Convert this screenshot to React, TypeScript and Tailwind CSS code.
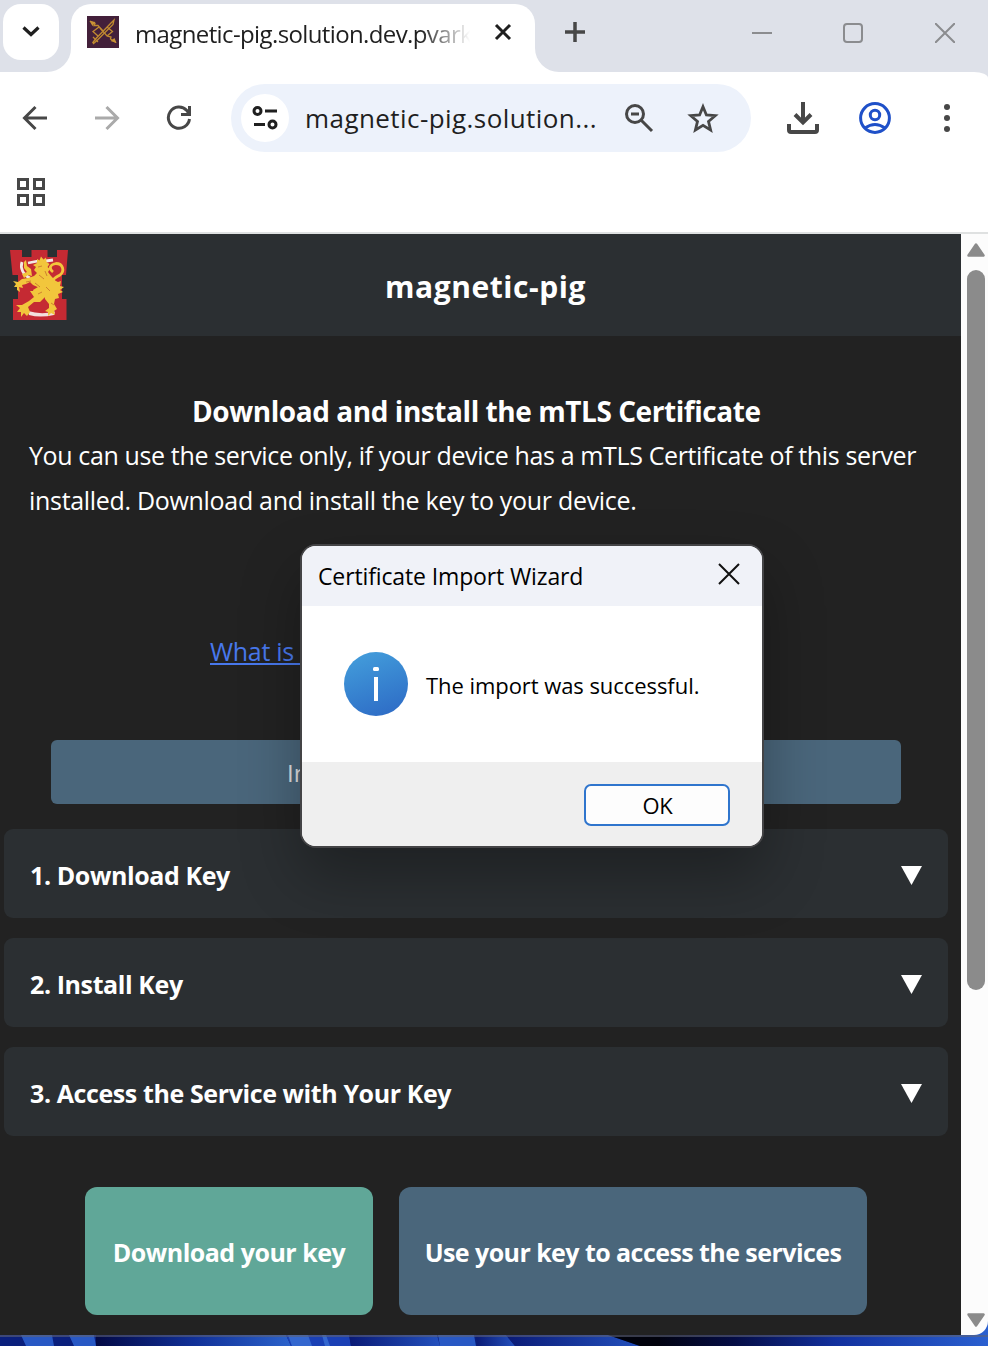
import type { ReactNode } from 'react';

const navButton = 'flex h-[40px] w-[40px] items-center justify-center';

function Favicon() {
  return (
    <svg width="32" height="32" viewBox="0 0 32 32" className="shrink-0">
      <rect width="32" height="32" fill="#43203a" />
      <g fill="none" stroke="#c08a30" strokeWidth="1.3">
        <path d="M5.500 27 L8.500 23 L24 7 L27 4 L26 8.500 L10 24.500 L6 28" />
        <path d="M3 5 L8 7.500 L7 9.500 L11 9.500 L20 20 L24 21 L23.500 23 L29 26.500" />
        <path d="M12 11 L6 15.500 L11 20 M20 11 L25.500 15.500 L20 20 M6 21 L11 26 M13 12 L16 15" />
      </g>
      <path d="M2.500 5 l6 1 -3 4z M29.500 27 l-6 -2 4 -3z" fill="#c99336" />
    </svg>
  );
}

function Crest() {
  return (
    <svg width="60" height="72" viewBox="0 0 60 72">
      <path d="M1 1 H13 V8 H22.500 V1 H38.500 V8 H48 V1 H59 L57 26 H53 V50 H57.500 V71 H4 V50 H9 V26 H3.500Z" fill="#c52a33" />
      <path d="M13 13 C11 19 14 26 21 29 M19 14 L29 12 M37 12 L44 11" fill="none" stroke="#f3e9e5" strokeWidth="2.800" />
      <path d="M19 62 Q32 66 46 62.500 L45 66 Q31 69 20 66Z" fill="#f2dfdd" />
      <g fill="#f2c63c">
        <path d="M28 14 L28 10 L30.500 11.500 L32 7.500 L34.500 10.500 L37 8.500 L37.500 13 L40.500 15 L38.500 18 L41 20 L39 23 L42 27 L45 30 L44 35 L33 40 L24 36 L21 33 L17 35 L13 36 L14 39 L10 38 L11 43 L8 41 L8 38 L5 38 L7 35 L4 32 L9 33 L13 30 L19 29 L25 27 L28 24 L25 21 L27 18 L24 16Z" />
        <path d="M30 30 L43 29 L46 34 L52 32 L51 37 L55 38 L51 41 L54 43 L49 45 L50 49 L46 50 L45 55 L48 60 L45 62 L46 66 L42 64 L39 67 L39 63 L36 62 L40 59 L40 55 L36 50 L35 44 L29 45 L25 44 L24 41 L29 38Z" />
        <path d="M21 42 L36 42 L36 48 L31 53 L25 53 L19 58 L21 63 L18 67 L15 64 L12 68 L12 63 L8 63 L11 59 L7 56 L13 56 L20 52 L25 48Z" />
        <path d="M15 13 L17 11 L18 17 L22 20 L23 27 L19 26 L15 29 L13 25 L18 23 L15 19Z" />
      </g>
      <path d="M50 35 C40 31 46 29 51 26 C56 22 54 14.500 47 14.500 C40 16 40 20 44 23" fill="none" stroke="#f2c63c" strokeWidth="2.800" />
      <path d="M29 18 L33 17 M30 26 L35 30 M26 34 L31 38 M37 38 L41 42 M29 45 L33 43 M42 54 L45 56 M17 33 L22 32 M36 22 L38 27" stroke="#cf8230" strokeWidth="1" />
    </svg>
  );
}

function TabStrip() {
  return (
    <div className="flex h-[72px] shrink-0 bg-white text-[#1f1f1f]">
      <div className="w-[71px] rounded-br-[24px] bg-[#dee1e9] pl-[3px] pt-[4px]">
        <div className="flex h-[56px] w-[56px] items-center justify-center rounded-[18px] bg-white">
          <svg width="20" height="14" viewBox="0 0 20 14"><path d="M2.500 2.500 L10 9.500 L17.500 2.500" fill="none" stroke="#1f1f1f" strokeWidth="3.200" /></svg>
        </div>
      </div>
      <div className="w-[464px] bg-[#dee1e9] pt-[4px]">
        <div className="flex h-[68px] rounded-t-[20px] bg-white pl-[16px] pt-[12px]">
          <Favicon />
          <div className="ml-[16px] mt-[1px] h-[34px] w-[335px] whitespace-nowrap text-[24px] leading-[34px] tracking-[-0.62px] [mask-image:linear-gradient(to_right,black_285px,transparent_335px)]">
            magnetic-pig.solution.dev.pvark
          </div>
          <svg className="ml-[24px] mt-[7px]" width="18" height="18" viewBox="0 0 18 18"><path d="M2 2 L16 16 M16 2 L2 16" stroke="#1f1f1f" strokeWidth="3" /></svg>
        </div>
      </div>
      <div className="flex flex-1 rounded-bl-[24px] bg-[#dee1e9] pl-[30px] pt-[22px]">
        <svg width="20" height="20" viewBox="0 0 20 20"><path d="M10 0 V20 M0 10 H20" stroke="#474747" strokeWidth="3.500" /></svg>
        <svg className="ml-[167px] mt-px" width="20" height="20" viewBox="0 0 20 20"><path d="M0 10 H20" stroke="#8b8c8f" strokeWidth="2" /></svg>
        <svg className="ml-[71px] mt-px" width="20" height="20" viewBox="0 0 20 20"><rect x="1" y="1" width="18" height="18" rx="3" fill="none" stroke="#8b8c8f" strokeWidth="2" /></svg>
        <svg className="ml-[72px] mt-px" width="20" height="20" viewBox="0 0 20 20"><path d="M0 0 L20 20 M20 0 L0 20" stroke="#8b8c8f" strokeWidth="2" /></svg>
      </div>
    </div>
  );
}

function Toolbar() {
  return (
    <div className="h-[162px] shrink-0 bg-[#dee1e9]">
      <div className="h-full border-b-2 border-[#dfe1e1] bg-white pt-[12px] [border-top-right-radius:14px_6px]">
        <div className="flex h-[68px] items-center pl-[15px]">
          <div className={navButton}>
            <svg width="26" height="26" viewBox="0 0 26 26"><path d="M25 13 H2.500 M13.500 2 L2.500 13 L13.500 24" fill="none" stroke="#474747" strokeWidth="3" /></svg>
          </div>
          <div className={`${navButton} ml-[32px]`}>
            <svg width="26" height="26" viewBox="0 0 26 26"><path d="M1 13 H23.500 M12.500 2 L23.500 13 L12.500 24" fill="none" stroke="#aaa" strokeWidth="3" /></svg>
          </div>
          <div className={`${navButton} ml-[32px]`}>
            <svg width="26" height="26" viewBox="0 0 26 26" fill="none" stroke="#474747" strokeWidth="3"><path d="M23.500 14 A10.600 10.600 0 1 1 20.800 5.500 L22.500 8" /><path d="M23.500 1 V9.500 H15" /></svg>
          </div>
          <div className="ml-[32px] flex h-[68px] w-[520px] items-center rounded-full bg-[#edf2fb] pl-[10px]">
            <div className="flex h-[48px] w-[48px] shrink-0 items-center justify-center rounded-full bg-white">
              <svg width="26" height="24" viewBox="0 0 26 24" fill="none" stroke="#1f1f1f" strokeWidth="3"><circle cx="5.500" cy="5" r="3.500" /><path d="M13 5 H25 M2 18.500 H13" /><circle cx="20.500" cy="18.500" r="3.500" /></svg>
            </div>
            <span className="ml-[16px] w-[302px] whitespace-nowrap text-[26px] leading-[36px] tracking-[0.43px] text-[#1f1f1f]">magnetic-pig.solution...</span>
            <svg className="ml-[17px]" width="30" height="30" viewBox="0 0 30 30" fill="none" stroke="#474747" strokeWidth="3"><circle cx="11" cy="11" r="8.500" /><path d="M7 11 H15 M17 17 L28 28" /></svg>
            <svg className="ml-[33px]" width="32" height="30" viewBox="0 0 32 30"><path d="M16 3.700 L19.400 12 L28.200 12.700 L21.500 18.400 L23.600 27 L16 22.400 L8.400 27 L10.500 18.400 L3.800 12.700 L12.600 12Z" fill="none" stroke="#474747" strokeWidth="2.800" /></svg>
          </div>
          <svg className="ml-[36px]" width="32" height="32" viewBox="0 0 32 32" fill="none" stroke="#474747" strokeWidth="4"><path d="M16 0 V20 M8 12.500 L16 20.500 L24 12.500 M2 22 V28 Q2 30 4 30 H28 Q30 30 30 28 V22" /></svg>
          <svg className="ml-[40px]" width="32" height="32" viewBox="0 0 32 32" fill="none" stroke="#1f50c8" strokeWidth="3"><circle cx="16" cy="16" r="14.400" /><circle cx="16" cy="13" r="4.700" /><path d="M6 26 Q16 19 26 26" /></svg>
          <svg className="ml-[53px]" width="6" height="30" viewBox="0 0 6 30" fill="#474747"><circle cx="3" cy="4" r="3" /><circle cx="3" cy="15" r="3" /><circle cx="3" cy="26" r="3" /></svg>
        </div>
        <svg className="ml-[17px] mt-[26px]" width="28" height="28" viewBox="0 0 28 28" fill="none" stroke="#474747" strokeWidth="3"><path d="M1.500 1.500 H10.500 V10.500 H1.500Z M17.500 1.500 H26.500 V10.500 H17.500Z M1.500 17.500 H10.500 V26.500 H1.500Z M17.500 17.500 H26.500 V26.500 H17.500Z" /></svg>
      </div>
    </div>
  );
}

function Step({ children }: { children: ReactNode }) {
  return (
    <div className="flex h-[89px] items-center justify-between rounded-[9px] bg-[#2b2f32] pl-[26px] pr-[26px] pt-[4px] text-[25px] font-bold tracking-[-0.4px]">
      {children}
      <svg width="21" height="19" viewBox="0 0 21 19"><path d="M0 0 H21 L10.500 19Z" fill="#fff" /></svg>
    </div>
  );
}

function ScrollBar() {
  return (
    <div className="flex w-[27px] shrink-0 flex-col items-center rounded-br-[14px] bg-[#fcfcfc] pl-[3px]">
      <svg className="mt-[9px]" width="18" height="14" viewBox="0 0 18 14"><path d="M9 1.500 L16.500 12.500 H1.500Z" fill="#8b8b8b" stroke="#8b8b8b" strokeWidth="2.500" strokeLinejoin="round" /></svg>
      <div className="mt-[13px] h-[720px] w-[18px] rounded-full bg-[#8b8b8b]" />
      <svg className="mt-[323px]" width="18" height="14" viewBox="0 0 18 14"><path d="M9 12.500 L16.500 1.500 H1.500Z" fill="#8b8b8b" stroke="#8b8b8b" strokeWidth="2.500" strokeLinejoin="round" /></svg>
    </div>
  );
}

function Dialog() {
  return (
    <div className="absolute left-[300px] top-[544px] flex h-[304px] w-[464px] flex-col overflow-hidden rounded-[16px] border-2 border-[#444446] bg-white text-black shadow-[0_28px_60px_rgba(0,0,0,0.3)]">
      <div className="flex h-[60px] shrink-0 items-center justify-between bg-[#f0f2f8] pl-[16px] pr-[22px]">
        <span className="whitespace-nowrap text-[23px] leading-[32px] tracking-[-0.13px]">Certificate Import Wizard</span>
        <svg className="mb-[4px]" width="22" height="22" viewBox="0 0 22 22"><path d="M1 1 L21 21 M21 1 L1 21" stroke="#111" strokeWidth="2" /></svg>
      </div>
      <div className="flex flex-1 items-center pl-[42px]">
        <div className="flex h-[64px] w-[64px] shrink-0 items-center justify-center rounded-full bg-linear-160 from-[#45a0dc] to-[#2d68c4]">
          <svg width="6" height="34" viewBox="0 0 6 34" fill="#fff"><rect x="0" y="0" width="6" height="4" rx="1.500" /><rect x="1" y="10" width="4" height="24" /></svg>
        </div>
        <span className="ml-[18px] mt-[2px] whitespace-nowrap text-[22px] leading-[32px] tracking-[-0.06px]">The import was successful.</span>
      </div>
      <div className="flex h-[84px] shrink-0 justify-end bg-[#efefef] pr-[32px] pt-[22px]">
        <button className="h-[42px] w-[146px] rounded-[7px] border-2 border-[#2f75cd] bg-[#fdfdfd] pl-px text-[22px] leading-[34px] tracking-[-0.3px]">OK</button>
      </div>
    </div>
  );
}

function Wallpaper() {
  return (
    <svg width="988" height="26" viewBox="0 0 988 26" className="-mt-[15px] block shrink-0">
      <defs>
        <linearGradient id="w1"><stop offset="0" stopColor="#030945" /><stop offset=".5" stopColor="#113097" /><stop offset="1" stopColor="#2b62cb" /></linearGradient>
        <linearGradient id="w2"><stop offset="0" stopColor="#0a1a75" /><stop offset="1" stopColor="#2350bd" /></linearGradient>
        <linearGradient id="w3"><stop offset="0" stopColor="#01020c" /><stop offset=".25" stopColor="#050d45" /><stop offset=".55" stopColor="#12309e" /><stop offset="1" stopColor="#2a60d0" /></linearGradient>
      </defs>
      <rect width="660" height="26" fill="#0a1f7c" />
      <rect x="650" width="338" height="26" fill="url(#w3)" />
      <path d="M21 15 H52 L54 26 H26Z M69 15 H94 L96 26 H74Z" fill="#2858c4" />
      <path d="M96 15 H286 L291 26 H96Z" fill="url(#w1)" />
      <path d="M286 15 H349 L351 26 H291Z" fill="#1a40b5" />
      <path d="M288 15 H308 L312 26 H292Z M322 15 H326 L330 26 H325Z" fill="#3467cf" />
      <path d="M349 15 H437 L440 26 H351Z" fill="url(#w2)" />
      <path d="M476 15 H506 L515 26 H477Z" fill="url(#w2)" />
      <path d="M506 15 H608 L640 26 H515Z" fill="url(#w2)" />
      <path d="M438 15 H474 L476 26 H440Z" fill="#2858c4" />
      <path d="M608 15 H660 V26 H640Z" fill="#01020c" />
      <path d="M0 15 H988 V17 H0Z" fill="#5e6277" fillOpacity=".6" />
    </svg>
  );
}

export default function App() {
  return (
    <div className="relative flex h-[1346px] w-[988px] flex-col overflow-hidden bg-white font-['Open_Sans','Noto_Sans',sans-serif]">
      <TabStrip />
      <Toolbar />
      <div className="relative z-10 flex h-[1101px] shrink-0">
        <main className="w-[961px] bg-[#222] text-white">
          <header className="flex h-[102px] items-start bg-[#2b2f32] pl-[9px] pr-[17px] pt-[15px]">
            <Crest />
            <h1 className="mt-[18px] flex-1 pr-[42px] text-center text-[30px] font-bold leading-[40px] tracking-[0.55px]">magnetic-pig</h1>
          </header>
          <section className="h-[493px] pt-[53px]">
            <h2 className="whitespace-nowrap pl-[192px] text-[28px] font-bold leading-[45px] tracking-[-0.44px]">Download and install the mTLS Certificate</h2>
            <p className="-mt-px whitespace-nowrap pl-[29px] text-[25px] leading-[45px] tracking-[-0.37px]">You can use the service only, if your device has a mTLS Certificate of this server<br /><span className="tracking-[-0.31px]">installed. Download and install the key to your device.</span></p>
            <a className="ml-[210px] mt-[106px] block w-[400px] whitespace-nowrap text-[25px] leading-[45px] tracking-[-0.3px] text-[#4878ed] underline decoration-2 underline-offset-[2px]">What is a mTLS Key?</a>
            <div className="ml-[51px] mt-[66px] h-[64px] w-[850px] rounded-[6px] bg-[#4a667b] pl-[236px] text-[24px] leading-[65px] text-[#e1e3e5]">Instructions</div>
          </section>
          <div className="flex flex-col gap-[20px] pl-[4px] pr-[13px]">
            <Step>1. Download Key</Step>
            <Step>2. Install Key</Step>
            <Step>3. Access the Service with Your Key</Step>
          </div>
          <div className="mt-[51px] flex gap-[26px] pl-[85px] text-[25px] font-bold">
            <button className="h-[128px] w-[288px] whitespace-nowrap rounded-[12px] bg-[#60a798] pt-[4px] tracking-[-0.5px]">Download your key</button>
            <button className="h-[128px] w-[468px] whitespace-nowrap rounded-[12px] bg-[#4a667b] pt-[4px] tracking-[-0.56px]">Use your key to access the services</button>
          </div>
        </main>
        <ScrollBar />
      </div>
      <Wallpaper />
      <div className="absolute left-0 top-0 z-20"><Dialog /></div>
    </div>
  );
}
